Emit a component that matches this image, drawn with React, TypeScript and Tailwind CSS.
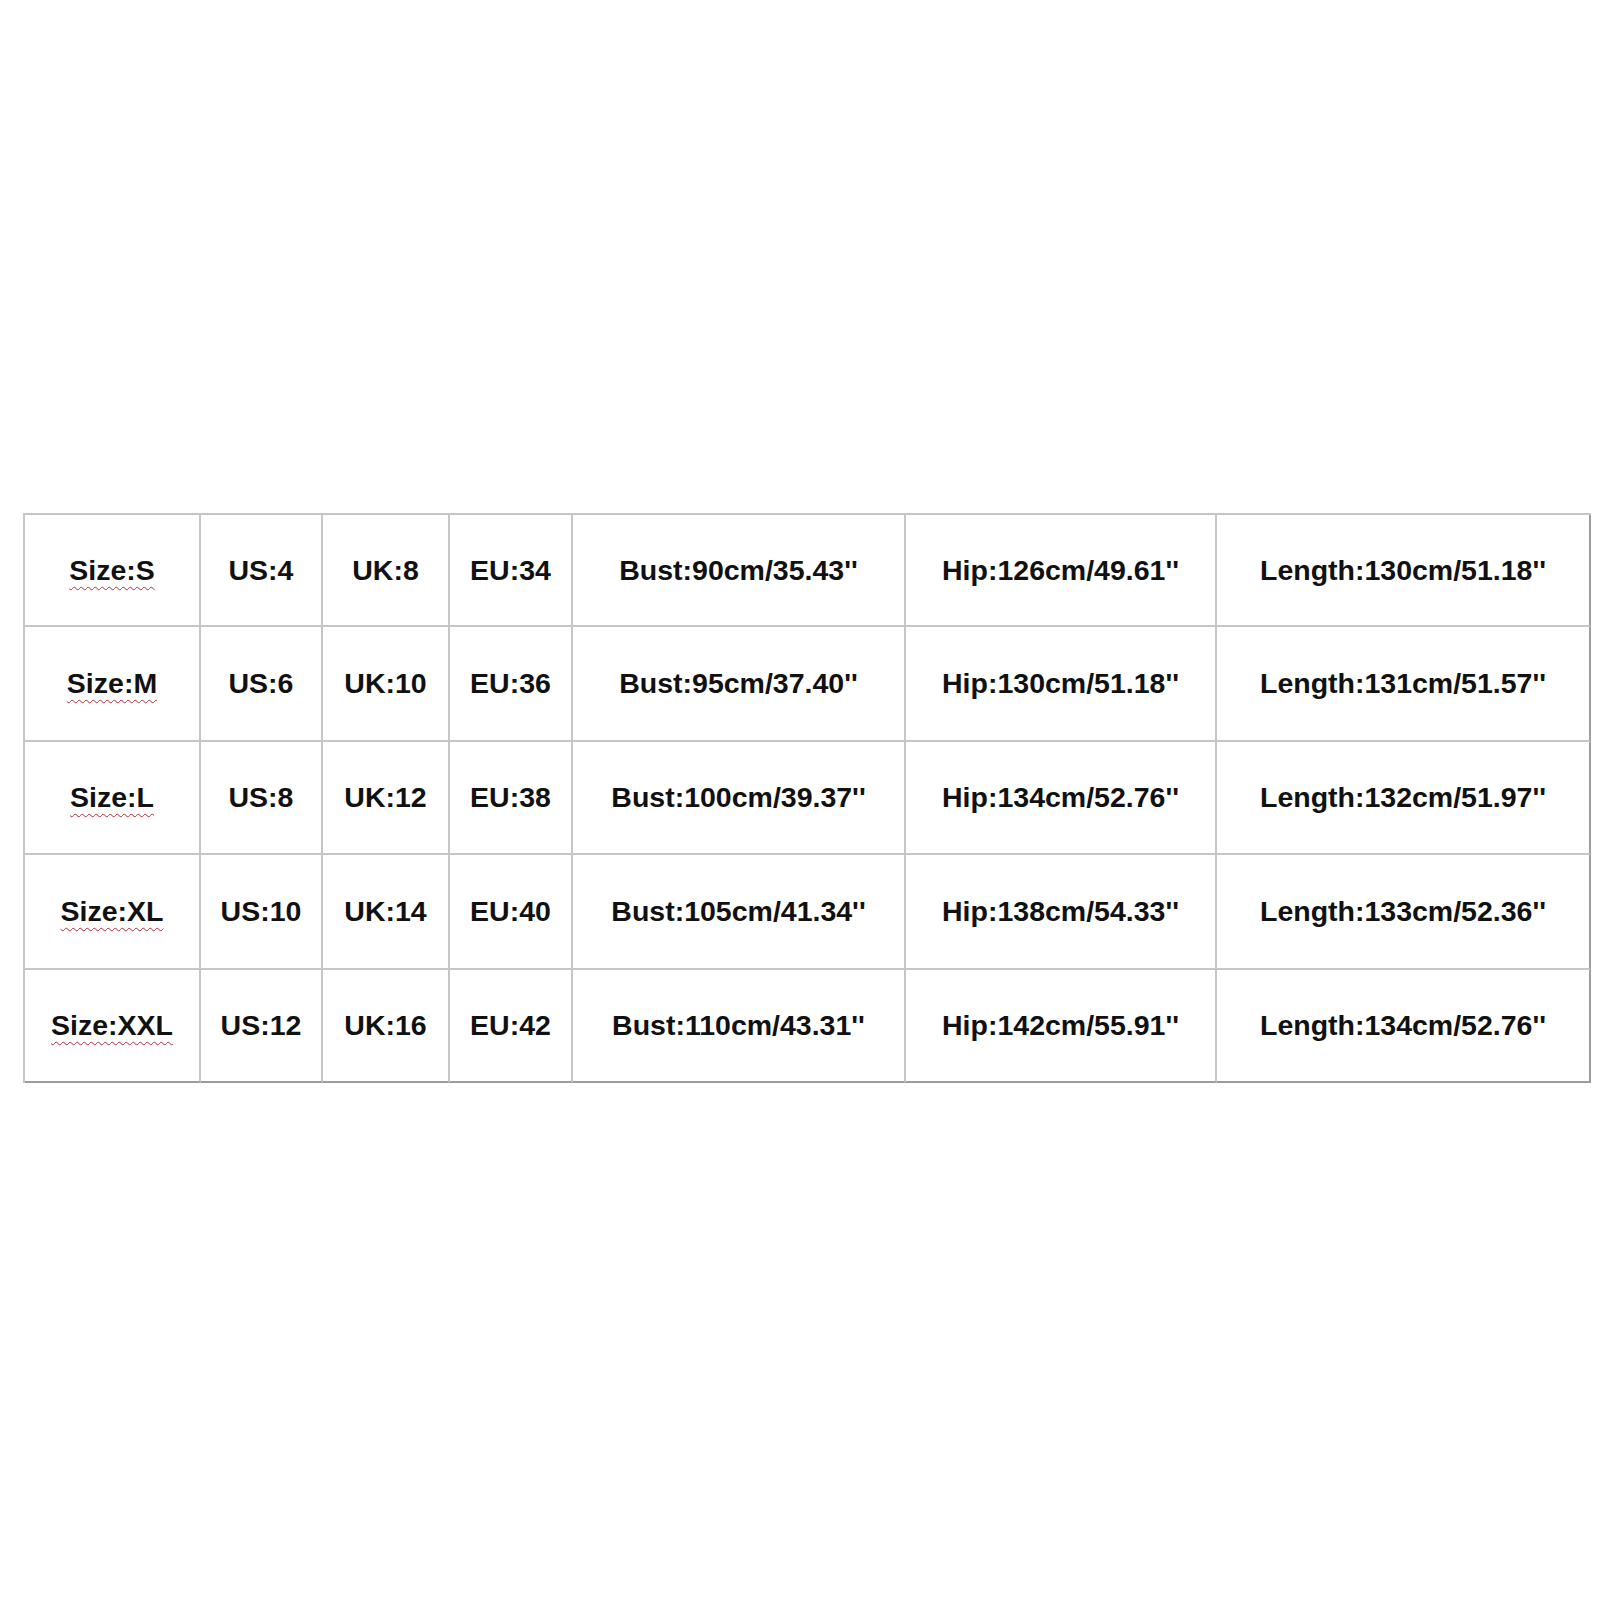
import React from "react";

const rows = [
  ["Size:S", "US:4", "UK:8", "EU:34", "Bust:90cm/35.43''", "Hip:126cm/49.61''", "Length:130cm/51.18''"],
  ["Size:M", "US:6", "UK:10", "EU:36", "Bust:95cm/37.40''", "Hip:130cm/51.18''", "Length:131cm/51.57''"],
  ["Size:L", "US:8", "UK:12", "EU:38", "Bust:100cm/39.37''", "Hip:134cm/52.76''", "Length:132cm/51.97''"],
  ["Size:XL", "US:10", "UK:14", "EU:40", "Bust:105cm/41.34''", "Hip:138cm/54.33''", "Length:133cm/52.36''"],
  ["Size:XXL", "US:12", "UK:16", "EU:42", "Bust:110cm/43.31''", "Hip:142cm/55.91''", "Length:134cm/52.76''"],
];

const rowHeights = ["h-[112px]", "h-[115px]", "h-[113px]", "h-[115px]", "h-[113px]"];

export default function App() {
  return (
    <div className="w-[1600px] h-[1600px] bg-white pt-[513px] pl-[23px]" style={{ fontFamily: '"Liberation Sans", Arial, sans-serif' }}>
      <div className="w-[1568px] border-l-2 border-t-2 border-l-[#c6c6c6] border-t-[#c6c6c6] grid grid-cols-[176px_122px_127px_123px_333px_311px_374px]">
        {rows.map((row, ri) =>
          row.map((cell, ci) => (
            <div
              key={`${ri}-${ci}`}
              className={`${rowHeights[ri]} flex items-center justify-center border-r-2 border-b-2 ${
                ci === 6 ? "border-r-[#9c9c9c]" : "border-r-[#c6c6c6]"
              } ${ri === 4 ? "border-b-[#9c9c9c]" : "border-b-[#c6c6c6]"}`}
            >
              {ci === 0 ? (
                <span className="text-[28.5px] font-bold text-[#111] leading-none underline decoration-wavy decoration-[#b02a3a] decoration-1 underline-offset-[6px]">
                  {cell}
                </span>
              ) : (
                <span className="text-[28.5px] font-bold text-[#111] leading-none">{cell}</span>
              )}
            </div>
          ))
        )}
      </div>
    </div>
  );
}
